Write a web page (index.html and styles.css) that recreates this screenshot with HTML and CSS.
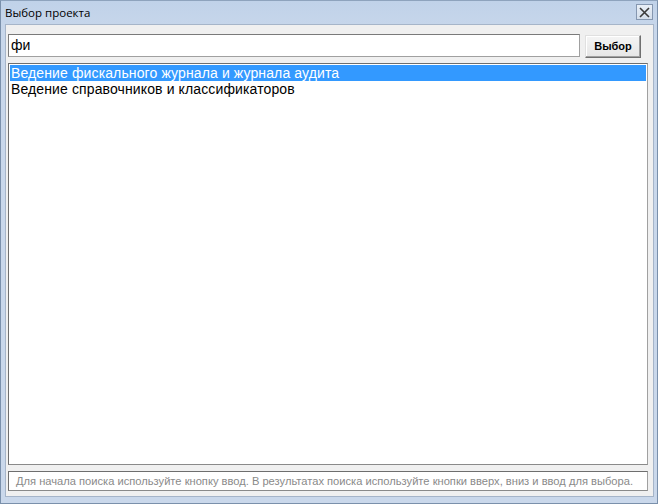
FILE: index.html
```html
<!DOCTYPE html>
<html lang="ru">
<head>
<meta charset="utf-8">
<title>Выбор проекта</title>
<link rel="stylesheet" href="styles.css">
</head>
<body>
<div class="window">
  <div class="titlebar">
    <span class="title">Выбор проекта</span>
    <span class="close">
      <svg width="15" height="13" viewBox="0 0 15 13"><path d="M3 2 L12 11 M12 2 L3 11" stroke="#3a3a3a" stroke-width="1.6" fill="none"/></svg>
    </span>
  </div>
  <div class="client">
    <div class="searchrow">
      <div class="search">фи</div>
      <div class="btn">Выбор</div>
    </div>
    <div class="list">
      <div class="item selected">Ведение фискального журнала и журнала аудита</div>
      <div class="item">Ведение справочников и классификаторов</div>
    </div>
    <div class="status">Для начала поиска используйте кнопку ввод. В результатах поиска используйте кнопки вверх, вниз и ввод для выбора.</div>
  </div>
</div>
</body>
</html>
```
FILE: styles.css
```css
html, body {
  margin: 0;
  padding: 0;
}
body {
  width: 658px;
  height: 504px;
  overflow: hidden;
  font-family: "Liberation Sans", Arial, sans-serif;
}
.window {
  box-sizing: border-box;
  width: 658px;
  height: 504px;
  display: flex;
  flex-direction: column;
  background: linear-gradient(#c0d2e9, #c8d7eb 30px, #cad8eb);
  border: 1px solid #7a90ab;
  border-top-color: #8ea3bd;
}
.titlebar {
  height: 23px;
  display: flex;
  align-items: center;
  justify-content: space-between;
  padding: 0 4px 0 4px;
}
.title {
  font-family: "Open Sans", "Liberation Sans", sans-serif;
  font-size: 11.5px;
  color: #000;
  margin-top: -1px;
}
.close {
  box-sizing: border-box;
  width: 17px;
  height: 16px;
  margin-top: -1px;
  border: 1px solid #8597b0;
  background: linear-gradient(#e9eff7, #d4deeb);
  display: flex;
  align-items: center;
  justify-content: center;
}
.client {
  flex: 1;
  margin: 0 3px 6px 4px;
  background: #f0f0f0;
  border: 1px solid #a6b5c9;
  display: flex;
  flex-direction: column;
  padding: 9px 5px 5px 2px;
}
.searchrow {
  display: flex;
  height: 24px;
  gap: 5px;
}
.search {
  flex: 1;
  box-sizing: border-box;
  height: 23px;
  background: #fff;
  border: 1px solid #7a7a7a;
  border-right-color: #a0a0a0;
  border-bottom-color: #a0a0a0;
  font-size: 14px;
  line-height: 21px;
  padding-left: 2px;
  color: #000;
}
.btn {
  box-sizing: border-box;
  width: 56px;
  height: 23px;
  margin-top: 1px;
  margin-right: 7px;
  border: 1px solid #707070;
  border-top-color: #e0e0e0;
  border-left-color: #e0e0e0;
  box-shadow: inset -1px -1px 0 #a0a0a0, inset 1px 1px 0 #fff;
  background: linear-gradient(#f4f4f4, #e6e6e6);
  font-weight: bold;
  font-size: 11px;
  line-height: 21px;
  text-align: center;
  color: #000;
}
.list {
  flex: 1;
  margin-top: 5px;
  background: #fff;
  border: 1px solid #6e6e6e;
  border-right-color: #a0a0a0;
  border-bottom-color: #8a8a8a;
  padding: 1px;
}
.item {
  height: 16px;
  font-size: 14px;
  letter-spacing: 0.12px;
  line-height: 16px;
  padding-left: 1px;
  color: #000;
  white-space: nowrap;
}
.item.selected {
  background: #3399ff;
  color: #fff;
}
.status {
  box-sizing: border-box;
  height: 20px;
  margin-top: 6px;
  background: #fff;
  border: 1px solid #6e6e6e;
  border-right-color: #a0a0a0;
  border-bottom-color: #8a8a8a;
  font-size: 11.15px;
  line-height: 18px;
  color: #8a8a8a;
  padding-left: 7px;
  white-space: nowrap;
  overflow: hidden;
}
```
